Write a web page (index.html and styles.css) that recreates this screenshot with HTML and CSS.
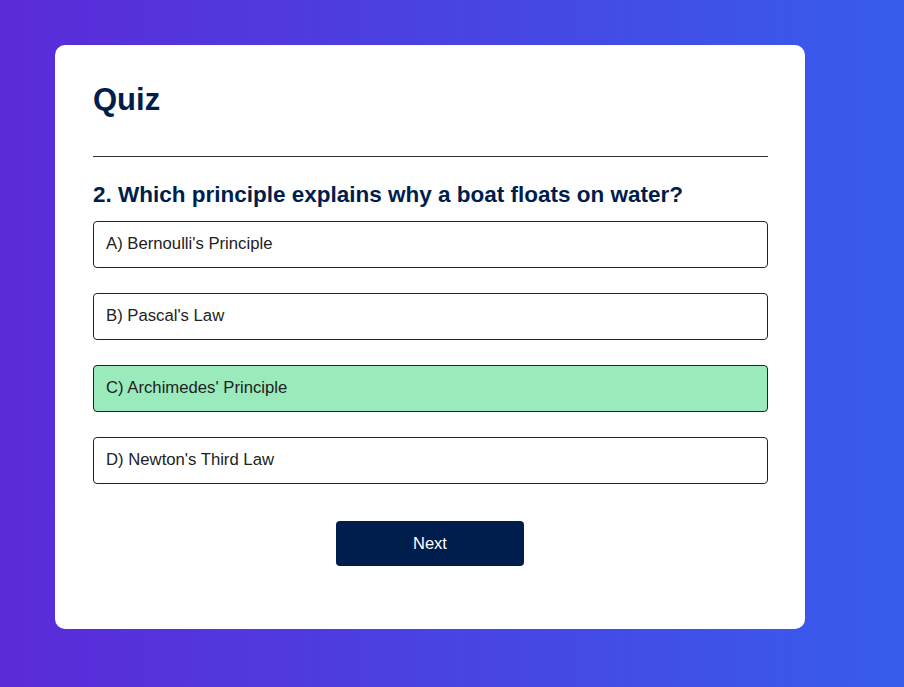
FILE: index.html
```html
<!DOCTYPE html>
<html lang="en">
<head>
<meta charset="utf-8">
<title>Quiz</title>
<link rel="stylesheet" href="styles.css">
</head>
<body>
<main class="app">
  <h1 class="title">Quiz</h1>
  <section class="quiz">
    <h2 class="question">2. Which principle explains why a boat floats on water?</h2>
    <div class="answers">
      <button class="btn">A) Bernoulli's Principle</button>
      <button class="btn">B) Pascal's Law</button>
      <button class="btn correct">C) Archimedes' Principle</button>
      <button class="btn">D) Newton's Third Law</button>
    </div>
    <button class="next">Next</button>
  </section>
</main>
</body>
</html>
```
FILE: styles.css
```css
* { box-sizing: border-box; }
html, body { height: 100%; }
body {
  margin: 0;
  padding: 45px 0 0 55px;
  background: linear-gradient(90deg, #5b2ad9 0%, #375ced 100%);
  font-family: "Liberation Sans", Arial, sans-serif;
}
.app {
  width: 750px;
  background: #fff;
  border-radius: 10px;
  padding: 38px 37px 63px 38px;
}
.title {
  margin: 0;
  font-size: 31px;
  line-height: 34px;
  font-weight: 700;
  color: #001e4d;
  padding-bottom: 39px;
  border-bottom: 1px solid #333;
}
.quiz { display: flex; flex-direction: column; }
.question {
  margin: 25px 0 14px;
  font-size: 22.5px;
  line-height: 25px;
  font-weight: 700;
  color: #001e4d;
}
.answers { display: flex; flex-direction: column; gap: 25px; }
.btn {
  display: block;
  width: 100%;
  height: 47px;
  padding: 0 12px 2px;
  background: #fff;
  color: #222;
  font-family: inherit;
  font-size: 16.7px;
  text-align: left;
  border: 1px solid #222;
  border-radius: 4px;
}
.btn.correct { background: #9aeabc; }
.next {
  align-self: center;
  width: 188px;
  height: 45px;
  margin-top: 37px;
  margin-right: 1px;
  background: #001e4d;
  color: #fff;
  font-family: inherit;
  font-size: 16.5px;
  border: 0;
  border-radius: 4px;
}
```
